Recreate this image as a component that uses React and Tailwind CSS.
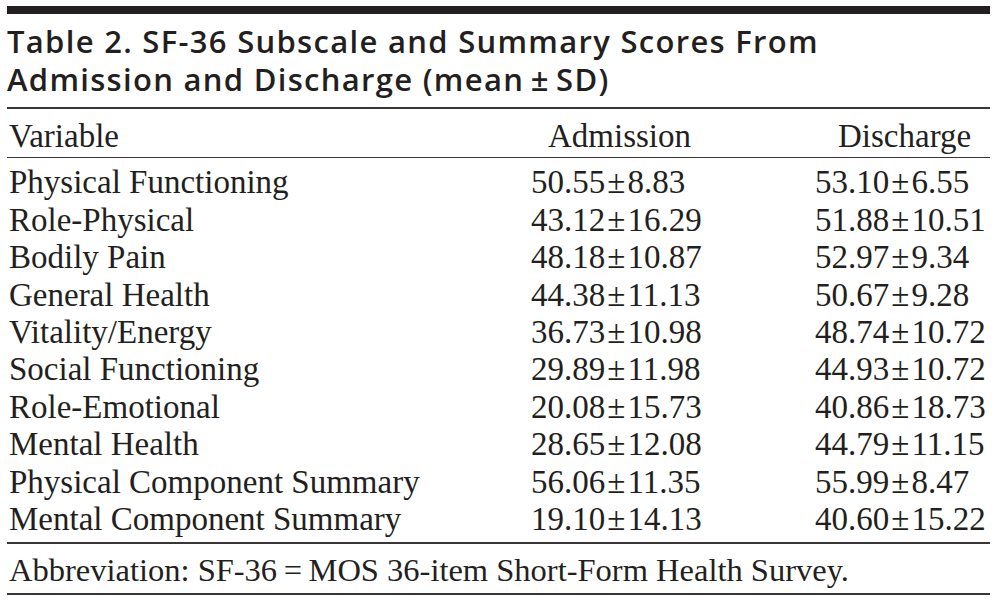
import React from "react";

const rows = [
  ["Physical Functioning", "50.55", "8.83", "53.10", "6.55"],
  ["Role-Physical", "43.12", "16.29", "51.88", "10.51"],
  ["Bodily Pain", "48.18", "10.87", "52.97", "9.34"],
  ["General Health", "44.38", "11.13", "50.67", "9.28"],
  ["Vitality/Energy", "36.73", "10.98", "48.74", "10.72"],
  ["Social Functioning", "29.89", "11.98", "44.93", "10.72"],
  ["Role-Emotional", "20.08", "15.73", "40.86", "18.73"],
  ["Mental Health", "28.65", "12.08", "44.79", "11.15"],
  ["Physical Component Summary", "56.06", "11.35", "55.99", "8.47"],
  ["Mental Component Summary", "19.10", "14.13", "40.60", "15.22"],
];

const serif = { fontFamily: '"Liberation Serif", "Times New Roman", serif' };
const sans = { fontFamily: '"Open Sans", "Liberation Sans", sans-serif' };

const Val = ({ m, sd }) => (
  <span>
    {m}
    <span className="px-[2px]">±</span>
    {sd}
  </span>
);

export default function App() {
  return (
    <div className="w-[997px] h-[600px] bg-white px-[7px] pt-[6px] text-[#231f20]">
      <div className="border-t-[8px] border-[#231f20]">
        {/* ---------------- TITLE ---------------- */}
        <h1
          className="pt-[7.5px] pb-[9.5px] text-[31px] leading-[38px] font-semibold tracking-[1.3px]"
          style={sans}
        >
          Table 2. SF-36 Subscale and Summary Scores From
          <br />
          Admission and Discharge (mean{"\u2009"}±{"\u2009"}SD)
        </h1>

        {/* ---------------- TABLE ---------------- */}
        <div style={serif} className="text-[33px]">
          <div className="grid grid-cols-[524px_284px_1fr] border-t-2 border-[#3a3637] pt-[9px] pb-[2px] leading-[37.4px]">
            <div className="pl-[2px]">Variable</div>
            <div className="pl-[17px]">Admission</div>
            <div className="pl-[23px]">Discharge</div>
          </div>
          <div className="border-t-[1.5px] border-[#3a3637] pt-[6px] pb-[4px]">
            {rows.map((r, i) => (
              <div
                key={i}
                className="grid grid-cols-[524px_284px_1fr] leading-[37.4px]"
              >
                <div className="pl-[2px]">{r[0]}</div>
                <div>
                  <Val m={r[1]} sd={r[2]} />
                </div>
                <div>
                  <Val m={r[3]} sd={r[4]} />
                </div>
              </div>
            ))}
          </div>
          <div className="border-t-2 border-b-2 border-[#3a3637] pt-[12px] pb-[9px] text-[32.5px] leading-[28px] pl-[2px]">
            Abbreviation: SF-36{"\u2009"}={"\u2009"}MOS 36-item Short-Form Health Survey.
          </div>
        </div>
      </div>
    </div>
  );
}
